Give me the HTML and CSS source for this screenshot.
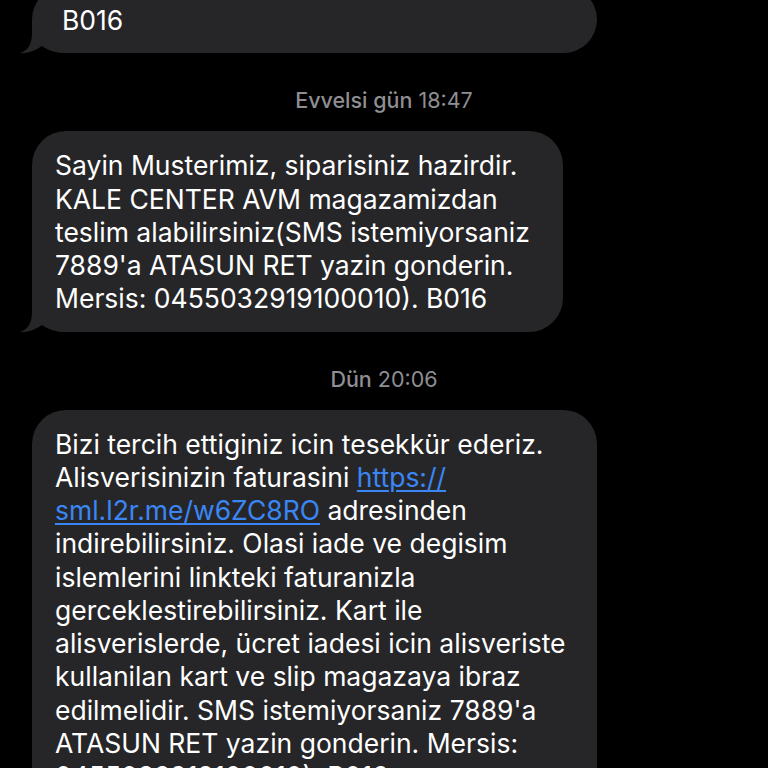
FILE: index.html
```html
<!DOCTYPE html>
<html lang="tr">
<head>
<meta charset="utf-8">
<title>Mesajlar</title>
<link rel="stylesheet" href="styles.css">
</head>
<body>
<div class="thread">
  <div class="bubble bubble-wide bubble-cut">
    <p class="text">B016</p>
    <svg class="tail" width="46" height="40" viewBox="-12 -34 46 40" aria-hidden="true"><path d="M0,-34 L0,-20 C0,-8 -5,-2 -12,0 C-4,1 4,-3 10,-7 C16,-3 22,0 34,0 L34,-34 Z"/></svg>
  </div>

  <div class="stamp"><span class="stamp-day">Evvelsi gün</span> 18:47</div>

  <div class="bubble bubble-mid">
    <p class="text">Sayin Musterimiz, siparisiniz hazirdir.<br>KALE CENTER AVM magazamizdan<br>teslim alabilirsiniz(SMS istemiyorsaniz<br>7889'a ATASUN RET yazin gonderin.<br>Mersis: 0455032919100010). B016</p>
    <svg class="tail" width="46" height="40" viewBox="-12 -34 46 40" aria-hidden="true"><path d="M0,-34 L0,-20 C0,-8 -5,-2 -12,0 C-4,1 4,-3 10,-7 C16,-3 22,0 34,0 L34,-34 Z"/></svg>
  </div>

  <div class="stamp"><span class="stamp-day">Dün</span> 20:06</div>

  <div class="bubble bubble-wide">
    <p class="text">Bizi tercih ettiginiz icin tesekkür ederiz.<br>Alisverisinizin faturasini <a class="link" href="#">https://<br>sml.l2r.me/w6ZC8RO</a> adresinden<br>indirebilirsiniz. Olasi iade ve degisim<br>islemlerini linkteki faturanizla<br>gerceklestirebilirsiniz. Kart ile<br>alisverislerde, ücret iadesi icin alisveriste<br>kullanilan kart ve slip magazaya ibraz<br>edilmelidir. SMS istemiyorsaniz 7889'a<br>ATASUN RET yazin gonderin. Mersis:<br>0455032919100010). B016</p>
    <svg class="tail" width="46" height="40" viewBox="-12 -34 46 40" aria-hidden="true"><path d="M0,-34 L0,-20 C0,-8 -5,-2 -12,0 C-4,1 4,-3 10,-7 C16,-3 22,0 34,0 L34,-34 Z"/></svg>
  </div>
</div>
</body>
</html>
```

FILE: styles.css
```css
html, body {
  margin: 0;
  padding: 0;
  background: #000;
}
body {
  height: 768px;
  overflow: hidden;
  font-family: Inter, "Noto Sans", "Liberation Sans", sans-serif;
  -webkit-font-smoothing: antialiased;
}
.thread {
  display: flex;
  flex-direction: column;
  align-items: flex-start;
  padding-left: 32px;
}
.bubble {
  position: relative;
  box-sizing: border-box;
  background: #262628;
  color: #fff;
  border-radius: 34px;
  padding: 18px 20px 16px 23px;
}
.bubble-wide { width: 565px; }
.bubble-mid { width: 531px; }
.bubble-cut {
  margin-top: -14px;
  padding-left: 30px;
}
.text {
  position: relative;
  z-index: 1;
  margin: 0;
  font-size: 26.5px;
  line-height: 33.25px;
  white-space: nowrap;
}
.link {
  color: #3a86f5;
  text-decoration: underline;
  text-decoration-thickness: 1.5px;
  text-underline-offset: 3px;
}
.tail {
  position: absolute;
  left: -12px;
  bottom: -6px;
  fill: #262628;
}
.stamp {
  align-self: stretch;
  text-align: center;
  color: #8e8e93;
  font-size: 21.5px;
  line-height: 26px;
  margin: 34px 32px 18px 0;
}
.stamp-day { font-weight: 500; }
```
